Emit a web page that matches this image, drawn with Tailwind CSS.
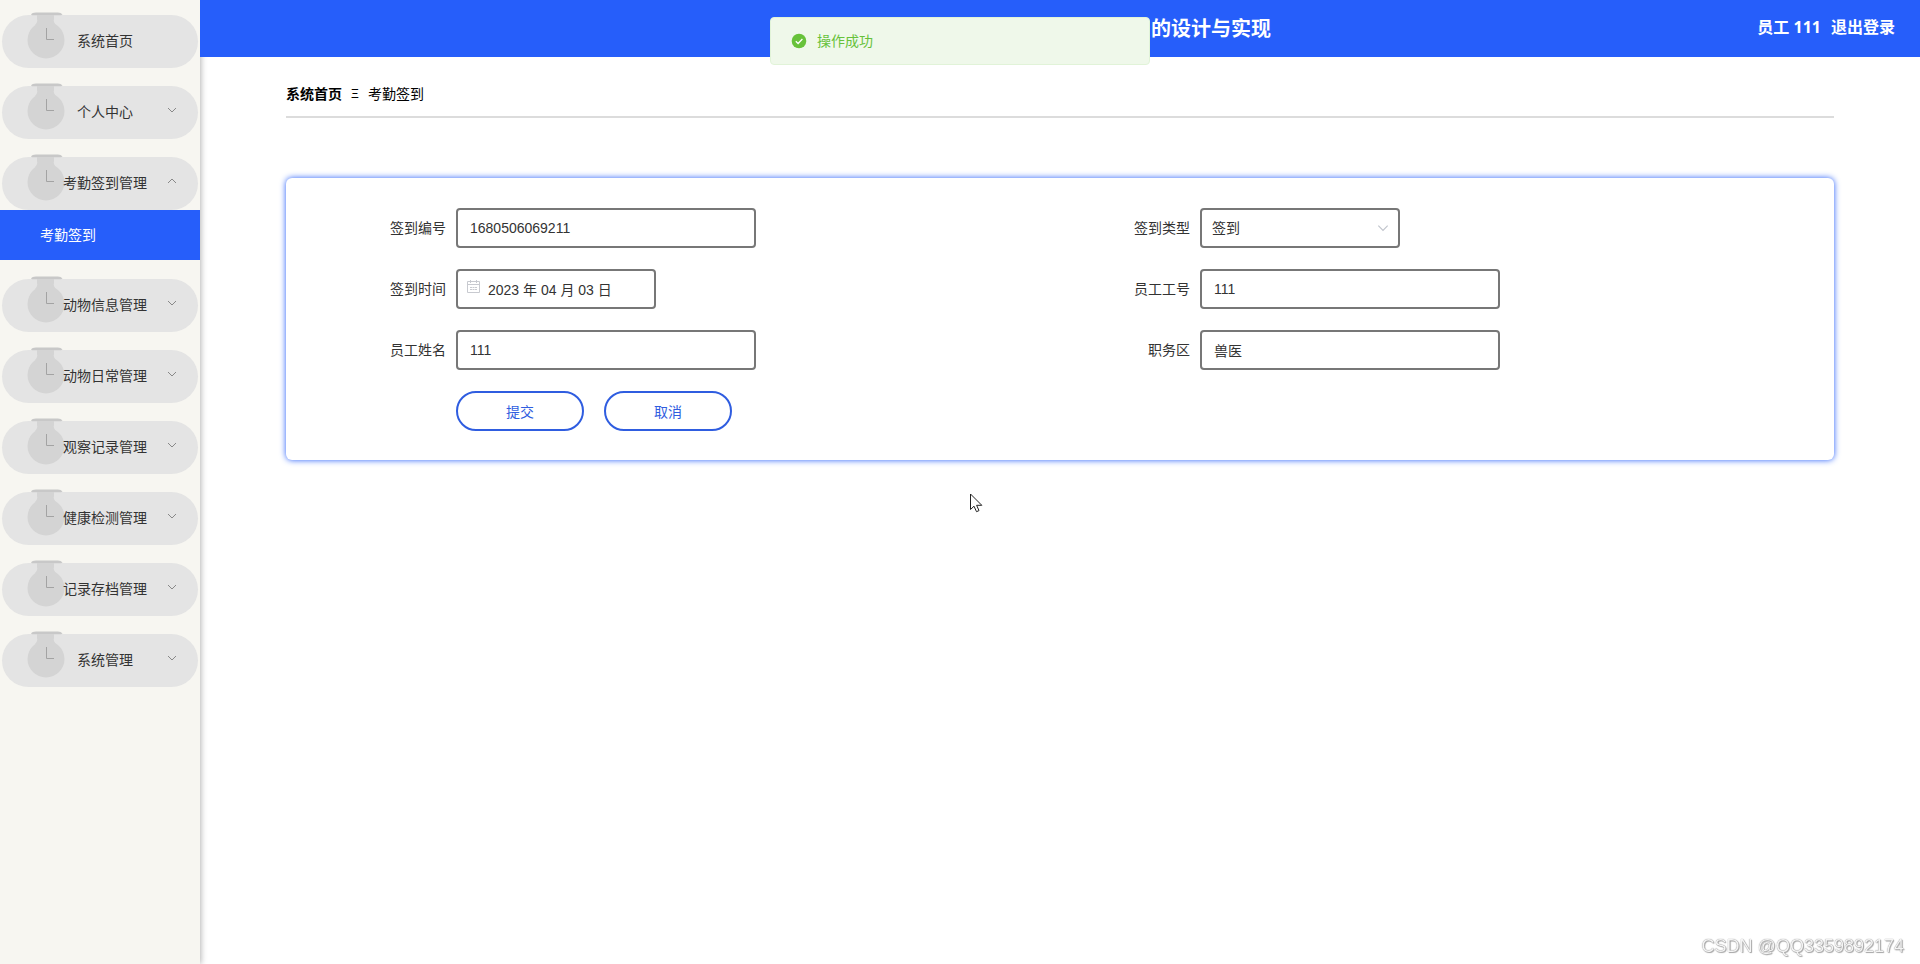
<!DOCTYPE html>
<html lang="zh-CN">
<head>
<meta charset="utf-8">
<title>考勤签到</title>
<script src="https://cdn.jsdelivr.net/npm/@tailwindcss/browser@4"></script>
</head>
<body class="min-h-screen flex bg-white text-sm text-[#333] font-['Liberation_Sans','Noto_Sans_CJK_SC',sans-serif]">

<svg class="hidden" aria-hidden="true">
  <symbol id="watch" viewBox="0 0 40 48">
    <path d="M5 2.500Q6 .5 10 .5H32Q35 .5 36.500 2.500L35 3.200H6Z" fill="#c8c8c8"/>
    <path d="M11 3H28V7Q27 10 30 13H9Q12 10 11 7Z" fill="#d4d4d4"/>
    <circle cx="20" cy="28" r="18.500" fill="#d4d4d4"/>
    <path d="M20.500 16V27.500H28" fill="none" stroke="#a3a3a3"/>
  </symbol>
  <symbol id="down" viewBox="0 0 12 12">
    <path d="M2 4l4 4 4-4" fill="none" stroke="currentColor"/>
  </symbol>
  <symbol id="up" viewBox="0 0 12 12">
    <path d="M2 8l4-4 4 4" fill="none" stroke="currentColor"/>
  </symbol>
</svg>

<aside class="relative z-10 w-[200px] shrink-0 bg-[#f7f6f1] pt-[15px] shadow-[1px_0_6px_rgba(0,0,0,0.3)]">
  <nav class="flex flex-col gap-[18px]">
    <button class="relative mx-[2px] h-[53px] rounded-full bg-[#e4e4e4] pb-[2px] pl-[10px] text-center"><svg class="absolute left-6 -top-[3px] w-10 h-12"><use href="#watch"/></svg><span class="relative">系统首页</span></button>
    <button class="relative mx-[2px] h-[53px] rounded-full bg-[#e4e4e4] pb-[2px] pl-[10px] text-center"><svg class="absolute left-6 -top-[3px] w-10 h-12"><use href="#watch"/></svg><span class="relative">个人中心</span><svg class="absolute right-5 top-[18px] size-3 text-[#888]"><use href="#down"/></svg></button>
    <div class="flex flex-col pb-px">
      <button class="relative mx-[2px] h-[53px] rounded-full bg-[#e4e4e4] pb-[2px] pl-[10px] text-center"><svg class="absolute left-6 -top-[3px] w-10 h-12"><use href="#watch"/></svg><span class="relative">考勤签到管理</span><svg class="absolute right-5 top-[18px] size-3 text-[#888]"><use href="#up"/></svg></button>
      <a href="#" class="flex h-[50px] items-center bg-[#265efa] pl-10 text-white">考勤签到</a>
    </div>
    <button class="relative mx-[2px] h-[53px] rounded-full bg-[#e4e4e4] pb-[2px] pl-[10px] text-center"><svg class="absolute left-6 -top-[3px] w-10 h-12"><use href="#watch"/></svg><span class="relative">动物信息管理</span><svg class="absolute right-5 top-[18px] size-3 text-[#888]"><use href="#down"/></svg></button>
    <button class="relative mx-[2px] h-[53px] rounded-full bg-[#e4e4e4] pb-[2px] pl-[10px] text-center"><svg class="absolute left-6 -top-[3px] w-10 h-12"><use href="#watch"/></svg><span class="relative">动物日常管理</span><svg class="absolute right-5 top-[18px] size-3 text-[#888]"><use href="#down"/></svg></button>
    <button class="relative mx-[2px] h-[53px] rounded-full bg-[#e4e4e4] pb-[2px] pl-[10px] text-center"><svg class="absolute left-6 -top-[3px] w-10 h-12"><use href="#watch"/></svg><span class="relative">观察记录管理</span><svg class="absolute right-5 top-[18px] size-3 text-[#888]"><use href="#down"/></svg></button>
    <button class="relative mx-[2px] h-[53px] rounded-full bg-[#e4e4e4] pb-[2px] pl-[10px] text-center"><svg class="absolute left-6 -top-[3px] w-10 h-12"><use href="#watch"/></svg><span class="relative">健康检测管理</span><svg class="absolute right-5 top-[18px] size-3 text-[#888]"><use href="#down"/></svg></button>
    <button class="relative mx-[2px] h-[53px] rounded-full bg-[#e4e4e4] pb-[2px] pl-[10px] text-center"><svg class="absolute left-6 -top-[3px] w-10 h-12"><use href="#watch"/></svg><span class="relative">记录存档管理</span><svg class="absolute right-5 top-[18px] size-3 text-[#888]"><use href="#down"/></svg></button>
    <button class="relative mx-[2px] h-[53px] rounded-full bg-[#e4e4e4] pb-[2px] pl-[10px] text-center"><svg class="absolute left-6 -top-[3px] w-10 h-12"><use href="#watch"/></svg><span class="relative">系统管理</span><svg class="absolute right-5 top-[18px] size-3 text-[#888]"><use href="#down"/></svg></button>
  </nav>
</aside>

<div class="flex min-w-0 flex-1 flex-col">
  <header class="relative z-20 grid h-[57px] grid-cols-[1fr_422px_1fr] items-center bg-[#265efa] font-['Noto_Sans','Noto_Sans_CJK_SC',sans-serif] font-bold text-white">
    <h1 class="col-start-2 text-right text-xl">的设计与实现</h1>
    <div class="flex justify-end gap-[10px] pr-[25px] pb-[3px] text-base">
      <span>员工 111</span>
      <a href="#">退出登录</a>
    </div>
  </header>

  <main class="flex-1 px-[86px]">
    <div class="flex h-[61px] items-center gap-[9px] border-b-2 border-[#dcdcdc] pt-[16px] pb-[2px] text-black">
      <a href="#" class="font-bold">系统首页</a><span class="w-2 text-xs">Ξ</span><span>考勤签到</span>
    </div>

    <form class="mt-[60px] grid grid-cols-2 gap-y-[21px] rounded-md px-[30px] pt-[30px] pb-[29px] shadow-[0_0_6px_#265efa]">
      <div class="flex items-center">
        <label for="no" class="w-[130px] text-right">签到编号</label>
        <input id="no" value="1680506069211" class="ml-[10px] h-10 w-[300px] rounded border-2 border-[#777] px-3">
      </div>
      <div class="flex items-center">
        <label for="type" class="w-[130px] text-right">签到类型</label>
        <div class="relative ml-[10px]">
          <select id="type" class="h-10 w-[200px] appearance-none rounded border-2 border-[#777] px-[10px]"><option>签到</option></select>
          <svg class="pointer-events-none absolute right-[10px] top-[13px] size-[14px] text-[#c0c4cc]"><use href="#down"/></svg>
        </div>
      </div>
      <div class="flex items-center">
        <label for="date" class="w-[130px] text-right">签到时间</label>
        <div class="relative ml-[10px]">
          <input id="date" value="2023 年 04 月 03 日" class="h-10 w-[200px] rounded border-2 border-[#777] pl-[30px]">
          <svg class="pointer-events-none absolute left-[11px] top-[11px] size-[13px]" viewBox="0 0 13 13" fill="none" stroke="#c8cad0"><path d="M.5 1.500H12.500V12.500H.5ZM.5 4.500H12.500M3.500 0V3M9.500 0V3"/><path d="M3 7.500H10M3 9.500H10" stroke-dasharray="2 .5"/></svg>
        </div>
      </div>
      <div class="flex items-center">
        <label for="staff" class="w-[130px] text-right">员工工号</label>
        <input id="staff" value="111" class="ml-[10px] h-10 w-[300px] rounded border-2 border-[#777] px-3">
      </div>
      <div class="flex items-center">
        <label for="name" class="w-[130px] text-right">员工姓名</label>
        <input id="name" value="111" class="ml-[10px] h-10 w-[300px] rounded border-2 border-[#777] px-3">
      </div>
      <div class="flex items-center">
        <label for="area" class="w-[130px] text-right">职务区</label>
        <input id="area" value="兽医" class="ml-[10px] h-10 w-[300px] rounded border-2 border-[#777] px-3">
      </div>
      <div class="col-span-2 flex gap-5 pl-[140px] text-[#2f5de0]">
        <button type="button" class="h-10 w-32 rounded-full border-2 border-[#2f5de0] pt-[2px]">提交</button>
        <button type="button" class="h-10 w-32 rounded-full border-2 border-[#2f5de0] pt-[2px]">取消</button>
      </div>
    </form>
  </main>
</div>

<div role="status" class="fixed left-1/2 top-[17px] z-30 flex h-12 w-[380px] -translate-x-1/2 items-center gap-[10px] rounded border border-[#e1f3d8] bg-[#eff8ea] px-5 text-[#67c23a]">
  <svg class="size-[16px]" viewBox="0 0 16 16"><circle cx="8" cy="8" r="7.300" fill="#67c23a"/><path d="M4.800 8.200l2.300 2.300 4.300-4.500" fill="none" stroke="#fff" stroke-width="1.300"/></svg>
  <span>操作成功</span>
</div>

<svg class="fixed left-[970px] top-[493px] z-30 h-5 w-[13px]" viewBox="0 0 13 20"><path d="M.5 1V16.500L4 13.200L6.500 18.700L9 17.600L6.600 12.300H11.800Z" fill="#fff" stroke="#222"/></svg>

<div class="fixed right-4 bottom-[6px] z-30 font-['Liberation_Sans',sans-serif] text-lg leading-6 text-[#f4f4f4] [text-shadow:0_0_1px_#666,1px_1px_1px_#aaa]">CSDN @QQ3359892174</div>
</body>
</html>
